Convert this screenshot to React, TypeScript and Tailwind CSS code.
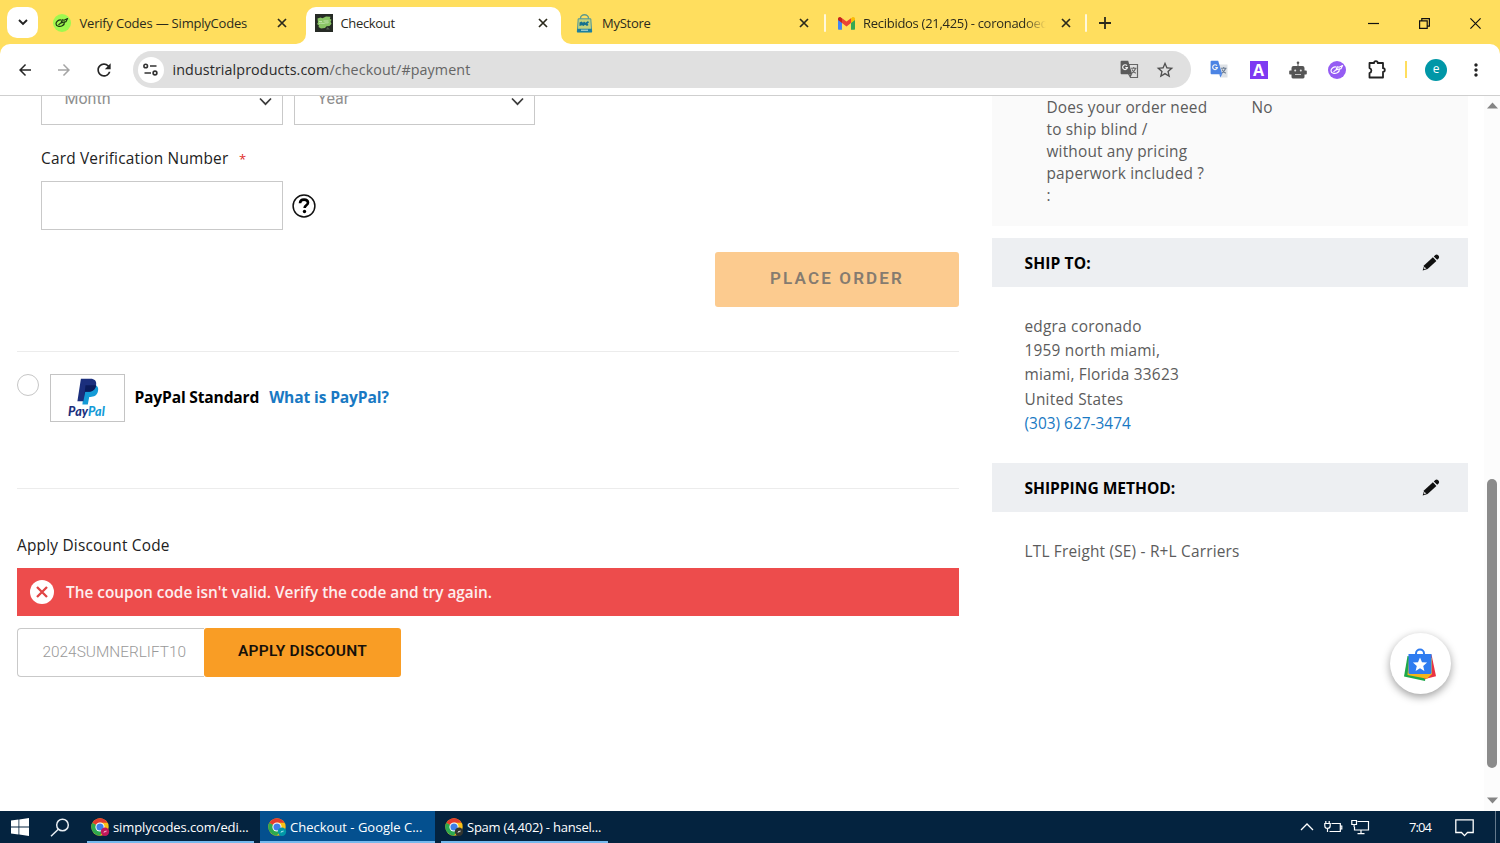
import React from "react";
import {
  MdArrowBack,
  MdArrowForward,
  MdRefresh,
  MdStarBorder,
  MdMoreVert,
} from "react-icons/md";

function CloseGlyph() {
  return (
    <svg width="10" height="10" viewBox="0 0 10 10" className="shrink-0">
      <path d="M1 1l8 8M9 1l-8 8" stroke="#2b2a1c" strokeWidth="1.7" fill="none" />
    </svg>
  );
}

function TabDivider() {
  return <div className="mt-3.5 h-4.5 w-0.5 shrink-0 rounded bg-[#fff8dc]" />;
}

function StoreIcon() {
  return (
    <svg width="17" height="19" viewBox="0 0 17 19" className="shrink-0">
      <path d="M4.500 5.500V4a4 3.300 0 0 1 8 0v1.500" stroke="#5f9a8c" strokeWidth="1.400" fill="none" />
      <path d="M2.200 4.800h12.600l.9 13.200H1.300z" fill="#c3d17a" stroke="#4f979b" strokeWidth="1" />
      <path d="M3.500 8.500l2-1 1.500 1.200 1-1.200 1.500 1.200 2.500-1.700 1 1.500-1.500 1 1 1.500-1.500 1-2-1.200-1.500 1.200-1.500-.8-2.500.8z" fill="#14708f" />
      <path d="M1.300 14.800h14.400l.3 3.400H1z" fill="#1b7fa0" />
      <path d="M5 16.200h7" stroke="#cfe8dc" strokeWidth="1" />
    </svg>
  );
}

function SumnerIcon() {
  return (
    <svg width="18" height="18" viewBox="0 0 18 18" className="shrink-0">
      <rect width="18" height="18" fill="#262b25" />
      <path d="M2.500 4.500l3-1 2 .7 3.500-1.700 4.500.2-.7 2 1.700 1-1 2 1 2-2 2.300-3 .2-1.500 1.800-4 .5-2.500-1.500.5-1.500-2-1.500 1-1.500z" fill="#8ac565" />
      <path d="M4 7.500h3M8.500 7h5M4 9.500c2.500-1 4 .5 5.500-.3s2.500 0 4-.6" stroke="#c8e6b4" strokeWidth=".9" fill="none" />
      <path d="M12.500 13l2.500 2.500h-4z" fill="#565e52" />
    </svg>
  );
}

function LeafIcon({ bg, ink }: { bg: string; ink: string }) {
  return (
    <svg width="18" height="18" viewBox="0 0 18 18" className="shrink-0">
      <circle cx="9" cy="9" r="9" fill={bg} />
      <path
        d="M8 6C5.500 5.700 3 7.500 3 9.800c0 2.600 3.800 3.300 6.300 1.900 1.400-.8 2.200-2.200 2-3.200"
        fill="none"
        stroke={ink}
        strokeWidth="1.200"
        strokeLinecap="round"
      />
      <path
        d="M5.800 10.600l3.500-2.800M8.300 8.200l1-2.500 1.700.6L14.600 4.600l-1.500 3-2.200.5-2.600.9"
        fill="none"
        stroke={ink}
        strokeWidth="1.100"
        strokeLinecap="round"
        strokeLinejoin="round"
      />
    </svg>
  );
}

function GmailIcon() {
  return (
    <svg width="17" height="13" viewBox="0 0 17 13" className="shrink-0">
      <path d="M0 2.500v9.300c0 .6.400 1 1 1h3V5.500z" fill="#4285f4" />
      <path d="M17 2.500v9.300c0 .6-.4 1-1 1h-3V5.500z" fill="#34a853" />
      <path d="M13 1.200V6l4-3V1.800C17 .3 15.300-.5 14.100.4z" fill="#fbbc04" />
      <path d="M4 6V1.200l4.500 3.400L13 1.200V6L8.500 9.400z" fill="#ea4335" />
      <path d="M0 1.800V3l4 3V1.200L2.900.4C1.700-.5 0 .3 0 1.800z" fill="#c5221f" />
    </svg>
  );
}

function TranslateIcon({ back, front, line, strokes }: { back: string; front: string; line: string; strokes: string }) {
  return (
    <svg width="19" height="19" viewBox="0 0 19 19" className="shrink-0">
      <path d="M9 4.500h8.500v13h-7L8 13z" fill={front} stroke={line} strokeWidth="1.200" />
      <path d="M11 8.300h5.500M13.700 7v1.300M15.500 8.500c-.5 2-2 3.600-3.700 4.700M12 9.500c.7 1.500 2.200 3 3.800 3.800" stroke={strokes} strokeWidth="1.100" fill="none" />
      <path d="M1.500.7h6.700l4 13.500H1.500A1 1 0 0 1 .6 13.300V1.700a1 1 0 0 1 .9-1z" fill={back} />
      <path d="M7 5.700a2.400 2.400 0 1 0 .4 2H5.300" stroke="#f2f2f2" strokeWidth="1.200" fill="none" />
      <path d="M9.500 14.200h2.700l-2 3.300z" fill={back} />
    </svg>
  );
}

function RobotIcon() {
  return (
    <svg width="18" height="18" viewBox="0 0 18 18" className="ml-[21px] shrink-0">
      <circle cx="9" cy="1.800" r="1.300" fill="#555" />
      <path d="M8.500 2.500h1V6h-1z" fill="#555" />
      <path d="M4.500 5h9a2 2 0 0 1 2 2V9.500h1.500a.8.800 0 0 1 .8.800v2.500a.8.800 0 0 1-.8.800h-1.500V16a1.400 1.400 0 0 1-1.400 1.400H3.900A1.400 1.400 0 0 1 2.500 16v-2.400H1a.8.800 0 0 1-.8-.8v-2.500A.8.800 0 0 1 1 9.500h1.500V7a2 2 0 0 1 2-2z" fill="#555" />
      <circle cx="6.200" cy="9.500" r="1" fill="#e4e4e4" />
      <circle cx="11.800" cy="9.500" r="1" fill="#e4e4e4" />
      <path d="M6 13.500h6" stroke="#c4c4c4" strokeWidth="1" />
    </svg>
  );
}

function ChromeIcon({ badge, mark }: { badge: string; mark: string }) {
  return (
    <svg width="19" height="19" viewBox="0 0 19 19" className="shrink-0">
      <circle cx="9" cy="9" r="8.700" fill="#fbc116" />
      <path d="M9 9L1.470 4.650A8.700 8.700 0 0 0 9 17.700l3.800-6.600z" fill="#2da94f" />
      <path d="M9 9L1.470 4.650a8.700 8.700 0 0 1 15.060 0H9z" fill="#e33b2e" />
      <circle cx="9" cy="9" r="4.600" fill="#fff" />
      <circle cx="9" cy="9" r="3.600" fill="#3f7ee8" />
      <circle cx="14" cy="13.800" r="4.200" fill={badge} />
      <path d="M12.800 14.800l2.300-2.300M13 13.600h2.500" stroke={mark} strokeWidth=".8" />
    </svg>
  );
}

function Pencil() {
  return (
    <svg width="18" height="17" viewBox="0 0 18 17">
      <path d="M.7 16.500l1.500-5.300L10.900 3.300l3.500 3.700L5.600 15z" fill="#111" />
      <path d="M11.800 2.500l1.500-1.400c.8-.7 1.900-.7 2.600 0l.7.700c.7.8.7 1.800 0 2.600l-1.400 1.400z" fill="#111" />
      <path d="M2.400 12.800l1.900 1.700-2 .8-.5-.5z" fill="#cfd0d2" />
    </svg>
  );
}

function SelectBox({ label }: { label: string }) {
  return (
    <div className="flex h-[49px] grow items-center justify-between border border-[#c9c9c9] bg-white pr-2.5 pl-[22.500px]">
      <span className="pb-1 font-[Roboto] text-[16px] leading-5 text-[#8f8f8f]">{label}</span>
      <svg width="13" height="9" viewBox="0 0 13 9" className="mt-px">
        <path d="M1 1.500l5.500 5.700L12 1.500" fill="none" stroke="#3c3c3c" strokeWidth="1.700" />
      </svg>
    </div>
  );
}

function SideHeader({ children }: { children: React.ReactNode }) {
  return (
    <div className="flex h-[49px] items-center justify-between bg-[#edeff2] pr-7 pl-[32.500px]">
      <h3 className="text-[15.600px] leading-5 font-bold text-black">{children}</h3>
      <Pencil />
    </div>
  );
}

function BrowserTabs() {
  return (
    <div className="flex h-11 shrink-0 bg-[#ffde5e] font-['Open_Sans',sans-serif] text-[13px] text-[#2b2a1c]">
      <div className="mt-[7px] ml-[7px] flex size-[31px] items-center justify-center rounded-[10px] bg-white">
        <svg width="10" height="7" viewBox="0 0 10 7">
          <path d="M1 1l4 4 4-4" fill="none" stroke="#222" strokeWidth="1.900" />
        </svg>
      </div>
      <div className="flex h-[46px] w-[268px] items-center pr-[19.500px] pl-[15px]">
        <LeafIcon bg="#9ff84f" ink="#1d3413" />
        <span className="mt-px ml-[8.500px] grow tracking-[-0.2px] whitespace-nowrap">Verify Codes — SimplyCodes</span>
        <CloseGlyph />
      </div>
      <div className="relative flex h-[37px] w-[255px] items-center self-end rounded-t-[10px] bg-white pr-[13px] pb-[5px] pl-[8.500px]">
        <svg className="absolute bottom-0 -left-2.5" width="10" height="10" viewBox="0 0 10 10">
          <path d="M10 0v10H0A10 10 0 0 0 10 0z" fill="#fff" />
        </svg>
        <svg className="absolute -right-2.5 bottom-0" width="10" height="10" viewBox="0 0 10 10">
          <path d="M0 0v10h10A10 10 0 0 1 0 0z" fill="#fff" />
        </svg>
        <SumnerIcon />
        <span className="mt-0.5 ml-2 grow tracking-[-0.33px]">Checkout</span>
        <CloseGlyph />
      </div>
      <div className="flex h-[46px] w-[263px] items-center pr-[15px] pl-[15px]">
        <StoreIcon />
        <span className="mt-px ml-[9px] grow tracking-[-0.27px]">MyStore</span>
        <CloseGlyph />
      </div>
      <TabDivider />
      <div className="flex h-[46px] w-[259px] items-center pr-[14px] pl-[11.500px]">
        <GmailIcon />
        <span className="mt-px ml-[8.500px] w-[183px] overflow-hidden tracking-[-0.28px] whitespace-nowrap [mask-image:linear-gradient(to_right,black_88%,transparent)]">
          Recibidos (21,425) - coronadoedgar
        </span>
        <span className="grow" />
        <CloseGlyph />
      </div>
      <TabDivider />
      <div className="flex h-[46px] grow items-center pl-3">
        <svg width="12" height="12" viewBox="0 0 12 12">
          <path d="M6 0v12M0 6h12" stroke="#2b2a1c" strokeWidth="1.800" />
        </svg>
      </div>
      <div className="flex h-[46px] items-center pr-[19px]">
        <svg width="11" height="11" viewBox="0 0 11 11" className="mr-10">
          <path d="M0 5.500h11" stroke="#111" strokeWidth="1.200" />
        </svg>
        <svg width="11" height="11" viewBox="0 0 11 11" className="mr-10">
          <path d="M.6 2.800h7.600v7.600H.6zM2.800 2.800V.6h7.600v7.600H8.200" fill="none" stroke="#111" strokeWidth="1.200" />
        </svg>
        <svg width="11" height="11" viewBox="0 0 11 11">
          <path d="M.4.400l10.200 10.200M10.600.4L.4 10.600" stroke="#111" strokeWidth="1.200" />
        </svg>
      </div>
    </div>
  );
}

function Toolbar() {
  return (
    <div className="shrink-0 bg-[#ffde5e]">
      <div className="flex h-[52px] items-center rounded-t-[10px] border-b border-[#cfcfcf] bg-white pl-4">
        <MdArrowBack className="size-[18px] text-[#262626]" />
        <MdArrowForward className="ml-[21px] size-[18px] text-[#a5a5a5]" />
        <MdRefresh className="ml-[21px] size-[20px] text-[#262626]" />
        <div className="ml-[18.500px] flex h-[37px] w-[1058px] items-center rounded-full bg-[#e0e0e0] pr-[16px] pl-[5px]">
          <div className="flex size-[26px] items-center justify-center rounded-full bg-white">
            <svg width="15" height="13" viewBox="0 0 15 13" fill="none" stroke="#333" strokeWidth="1.600">
              <circle cx="2.700" cy="3" r="1.800" />
              <path d="M7 3h6.500M1.500 10H8" />
              <circle cx="12" cy="10" r="1.900" />
            </svg>
          </div>
          <div className="mt-px ml-[9px] grow font-['Open_Sans',sans-serif] text-[14.300px] leading-5 text-[#656565]">
            <span className="tracking-[0.1px] text-[#2a2a2a]">industrialproducts.com</span>
            <span className="tracking-[0.1px]">/checkout/#payment</span>
          </div>
          <TranslateIcon back="#5b5b5b" front="#e0e0e0" line="#666" strokes="#666" />
          <MdStarBorder className="ml-[16px] size-[20px] text-[#505050]" />
        </div>
        <div className="ml-[19px] flex items-center">
          <TranslateIcon back="#4c84e4" front="#dde1e6" line="none" strokes="#6b7c93" />
          <div className="ml-[21px] flex size-[18px] items-center justify-center bg-[#7e3af2] font-['Open_Sans',sans-serif] text-[16px] leading-none font-bold text-white">
            A
          </div>
          <RobotIcon />
          <span className="ml-[21px] flex">
            <LeafIcon bg="#955cf3" ink="#ffffff" />
          </span>
          <svg width="20" height="20" viewBox="0 0 20 20" className="ml-[21.500px]">
            <path
              d="M2.500 3h4.600a1.800 1.800 0 0 1 3.600 0H16v5.200a1.800 1.800 0 0 1 0 3.600V17.500H2.500v-4.400a2.600 2.600 0 0 0 0-5z"
              fill="none"
              stroke="#222"
              strokeWidth="1.800"
              strokeLinejoin="round"
            />
          </svg>
          <div className="ml-[18px] h-[17px] w-0.5 bg-[#ffde5e]" />
          <div className="ml-[18px] flex size-[22px] items-center justify-center rounded-full bg-[#0097a7] pb-px font-['Open_Sans',sans-serif] text-[12px] leading-none text-white">
            e
          </div>
          <MdMoreVert className="ml-[18.500px] size-[20px] text-[#222]" />
        </div>
      </div>
    </div>
  );
}

function PayPalMark() {
  return (
    <div className="flex h-[48px] w-[75px] flex-col items-center border border-[#c4c4c4] bg-white pt-[3px]">
      <svg width="22" height="27" viewBox="0 0 22 27">
        <path d="M7.500 7.500h11.800c2 1.400 2.200 3.600 1.600 6-1 4-3.900 5.400-7.500 5.400h-1.200l-1.400 7.600H5.400z" fill="#149bd7" />
        <path d="M3.900.800h9.600c4 0 6.300 2.200 5.600 6.200-.8 4.800-4 6.800-8.300 6.800H8.200l-1.800 9.500H.400z" fill="#1b2f7d" />
        <path d="M8.500 7.300h10.600c-.6 4.800-4 6.500-8.300 6.500H8.200l-1 5z" fill="#0b1c5c" />
      </svg>
      <span className="-ml-0.5 font-[Lato,sans-serif] text-[12.500px] leading-[13px] font-black tracking-[0.1px] text-[#1b2f7d] italic">
        Pay<span className="text-[#149bd7]">Pal</span>
      </span>
    </div>
  );
}

function PaymentColumn() {
  return (
    <div className="ml-[17px] w-[942px]">
      <div className="ml-6 flex w-[494px]">
        <div className="flex w-[242px]">
          <SelectBox label="Month" />
        </div>
        <div className="ml-[11px] flex w-[241px]">
          <SelectBox label="Year" />
        </div>
      </div>
      <div className="mt-6 ml-6 h-5 leading-5 tracking-[0.2px] text-[#222]">
        Card Verification Number<span className="ml-[10.500px] text-[13px] text-[#e02b27]">*</span>
      </div>
      <div className="mt-3 flex items-center pl-6">
        <div className="h-[49px] w-[242px] border border-[#c9c9c9] bg-white" />
        <svg width="24" height="24" viewBox="0 0 24 24" className="ml-[9px]">
          <circle cx="12" cy="12" r="10.900" fill="none" stroke="#111" strokeWidth="1.500" />
          <path d="M8 9.200c.1-2.300 1.700-3.600 4-3.600 2.400 0 4 1.200 4 3.200 0 2.500-3.400 2.600-3.400 5.200" fill="none" stroke="#000" strokeWidth="2.600" />
          <circle cx="12.500" cy="17.500" r="1.700" />
        </svg>
      </div>
      <div className="mt-[22px] flex justify-end">
        <button className="h-[55px] w-[244px] rounded-[3px] bg-[#fccb8f] pb-0.5 text-center font-[Roboto] text-[17px] font-semibold tracking-[2.150px] text-[#857b70]">
          PLACE ORDER
        </button>
      </div>
      <div className="mt-11 h-px bg-[#ececec]" />
      <div className="mt-[22px] flex h-[48px]">
        <div className="size-[22px] rounded-full border border-[#c6c6c6]" />
        <div className="ml-[11px]">
          <PayPalMark />
        </div>
        <div className="mt-[13px] ml-[9.500px] text-[15.600px] leading-5 font-bold tracking-[-0.18px] whitespace-nowrap text-black">
          PayPal Standard<span className="ml-[10px] tracking-[-0.14px] text-[#1979c3]">What is PayPal?</span>
        </div>
      </div>
      <div className="mt-[66px] h-px bg-[#ececec]" />
      <div className="mt-[47px] h-5 leading-5 tracking-[0.22px] text-[#222]">Apply Discount Code</div>
      <div className="mt-3 flex h-12 items-center bg-[#ed4c4c] pl-[12.500px]">
        <svg width="24" height="24" viewBox="0 0 24 24">
          <circle cx="12" cy="12" r="12" fill="#fff" />
          <path d="M7 7l10 10M17 7L7 17" stroke="#e04444" strokeWidth="2.300" />
        </svg>
        <span className="mt-0.5 ml-[12.500px] font-semibold tracking-[-0.01px] whitespace-nowrap text-[#fdeeee]">
          The coupon code isn't valid. Verify the code and try again.
        </span>
      </div>
      <div className="mt-3 flex h-[49px] font-[Roboto]">
        <div className="flex w-[187px] items-center rounded-l-[4px] border border-r-0 border-[#c9c9c9] bg-white pl-[24.500px] text-[15.400px] font-light text-[#999]">
          2024SUMNERLIFT10
        </div>
        <button className="w-[197px] rounded-[3px] bg-[#f99d25] pb-0.5 text-[15.500px] font-semibold tracking-[0.260px] text-[#17110a]">
          APPLY DISCOUNT
        </button>
      </div>
    </div>
  );
}

function SummaryColumn() {
  return (
    <div className="ml-[33px] w-[476px] text-[#5c5c5c]">
      <div className="flex h-[150px] bg-[#fafafa] pt-[20.500px] pl-[54.500px] leading-[22px] tracking-[0.18px]">
        <div className="w-[172px]">
          Does your order need
          <br />
          to ship blind /
          <br />
          without any pricing
          <br />
          paperwork included ?
          <br />:
        </div>
        <div className="ml-[33px]">No</div>
      </div>
      <div className="mt-3">
        <SideHeader>
          <span className="tracking-[0.12px]">SHIP TO:</span>
        </SideHeader>
      </div>
      <div className="mt-7 pl-[32.500px] leading-[24.200px] tracking-[0.22px]">
        <div>edgra coronado</div>
        <div>1959 north miami,</div>
        <div>miami, Florida 33623</div>
        <div>United States</div>
        <div className="tracking-[0.02px] text-[#1979c3]">(303) 627-3474</div>
      </div>
      <div className="mt-[27px]">
        <SideHeader>
          <span className="tracking-[-0.03px]">SHIPPING METHOD:</span>
        </SideHeader>
      </div>
      <div className="mt-7 pl-[32.500px] leading-[24px] tracking-[0.2px]">LTL Freight (SE) - R+L Carriers</div>
    </div>
  );
}

function Scrollbar() {
  return (
    <div className="flex w-4 shrink-0 flex-col items-center bg-[#fcfcfc] pt-1.5 pb-[7px]">
      <svg width="11" height="7" viewBox="0 0 11 7">
        <path d="M5.500 0.500L11 6.500H0z" fill="#858585" />
      </svg>
      <div className="mt-[370px] h-[289px] w-2.5 rounded-full bg-[#8b8b8b]" />
      <div className="grow" />
      <svg width="11" height="7" viewBox="0 0 11 7">
        <path d="M5.500 6.500L0 .5h11z" fill="#858585" />
      </svg>
    </div>
  );
}

function ShopBadge() {
  return (
    <div className="absolute top-[537px] left-[1389.500px] flex size-[61px] items-center justify-center rounded-full bg-white shadow-[0_3px_8px_rgba(0,0,0,0.380)]">
      <svg width="34" height="34" viewBox="0 0 34 34" className="mt-0.5">
        <path d="M4.500 8L1 28.500l21 4.500 3-21z" fill="#1da94a" />
        <path d="M25 7.500l3.500-1 4.500 21.700-12 3z" fill="#ea3343" />
        <path d="M6 10l-1.500 17 19.500 3.800L29 26V10z" fill="#f4b41a" />
        <path d="M5.500 6h23v18.500a1.500 1.500 0 0 1-1.500 1.500h-20a1.500 1.500 0 0 1-1.500-1.500z" fill="#2f7cf0" />
        <path d="M13 7V5.500a4 4 0 0 1 8 0V7" fill="none" stroke="#2f7cf0" strokeWidth="2" />
        <path d="M17 9.500l2 4.700 5.100.4-3.900 3.300 1.200 5-4.400-2.700-4.400 2.700 1.200-5-3.900-3.300 5.100-.4z" fill="#fff" />
      </svg>
    </div>
  );
}

function TaskItem({ icon, children }: { icon: React.ReactNode; children: React.ReactNode }) {
  return (
    <>
      {icon}
      <span className="mt-px ml-[3px] whitespace-nowrap">{children}</span>
    </>
  );
}

function Taskbar() {
  return (
    <div className="flex h-8 shrink-0 items-stretch bg-[#04233f] font-['Open_Sans',sans-serif] text-[13px] text-white">
      <div className="flex w-10 items-center pl-[11px]">
        <svg width="18" height="18" viewBox="0 0 18 18" fill="#fff">
          <path d="M0 2.600l7.500-1.100v7.100H0zM8.300 1.400L18 0v8.600H8.300zM0 9.400h7.500v7.100L0 15.400zM8.300 9.400H18V18l-9.700-1.400z" />
        </svg>
      </div>
      <div className="flex w-[47px] items-center pl-[10px]">
        <svg width="20" height="19" viewBox="0 0 20 19" fill="none" stroke="#e8edf2" strokeWidth="1.500">
          <circle cx="12.500" cy="7" r="5.800" />
          <path d="M8.300 11.200L1 18.300" />
        </svg>
      </div>
      <div className="flex w-[167px] items-center border-b-2 border-[#76b9ed] pt-0.5 pl-1 tracking-[-0.1px]">
        <TaskItem icon={<ChromeIcon badge="#c2185b" mark="#f6b8cf" />}>simplycodes.com/edi...</TaskItem>
      </div>
      <div className="ml-1.5 flex w-[175px] items-center border-b-2 border-[#76b9ed] bg-[#04508f] pt-0.5 pl-2">
        <TaskItem icon={<ChromeIcon badge="#0097a7" mark="#a6e6ec" />}>Checkout - Google C...</TaskItem>
      </div>
      <div className="ml-1.5 flex w-[167px] items-center border-b-2 border-[#76b9ed] pt-0.5 pl-1 tracking-[-0.23px]">
        <TaskItem icon={<ChromeIcon badge="#33352f" mark="#e8e8e8" />}>Spam (4,402) - hansel...</TaskItem>
      </div>
      <div className="grow" />
      <div className="flex items-center">
        <svg width="14" height="8" viewBox="0 0 14 8">
          <path d="M1 7l6-6 6 6" fill="none" stroke="#fff" strokeWidth="1.300" />
        </svg>
        <svg width="19" height="14" viewBox="0 0 19 14" className="ml-[10px]" fill="none" stroke="#fff" strokeWidth="1.200">
          <path d="M7.500 3.500h8.800v8H5.500M16.300 6h1.500v3h-1.500M1.800 1v2.500M5.200 1v2.500M.8 3.500h5.400v2.200a2.700 2.700 0 0 1-5.400 0zM3.500 8.500V12" />
        </svg>
        <svg width="19" height="16" viewBox="0 0 19 16" className="ml-2" fill="none" stroke="#fff" strokeWidth="1.200">
          <path d="M6.500 2.500h11v8.500H3.500V8M10 11v3.500M6.500 14.600h7M.8 1.500h4.700v4H.8zM3.100 5.500V8" />
        </svg>
        <span className="mt-px ml-[39px] w-[26px] tracking-[-0.93px]">7:04</span>
        <svg width="19" height="18" viewBox="0 0 19 18" className="mt-0.5 ml-5" fill="none" stroke="#fff" strokeWidth="1.300">
          <path d="M.8.800h17.400v12.700h-5.700L9.500 16.600l-3-3.100H.8z" />
        </svg>
      </div>
      <div className="ml-[21px] h-full w-px bg-[#64798c]" />
      <div className="w-1" />
    </div>
  );
}

export default function App() {
  return (
    <div className="flex h-[843px] w-[1500px] flex-col overflow-hidden bg-white">
      <BrowserTabs />
      <Toolbar />
      <div className="relative flex min-h-0 grow overflow-hidden bg-white font-['Open_Sans','Noto_Sans',sans-serif] text-[15.400px]">
        <div className="-mt-5 flex grow">
          <PaymentColumn />
          <SummaryColumn />
        </div>
        <Scrollbar />
        <ShopBadge />
      </div>
      <Taskbar />
    </div>
  );
}
